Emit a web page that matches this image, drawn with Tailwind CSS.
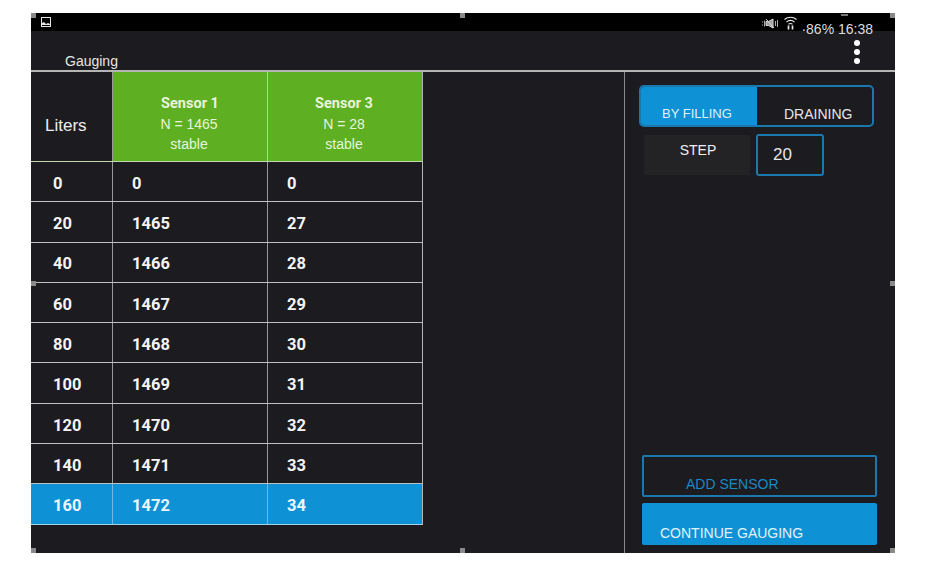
<!DOCTYPE html>
<html lang="en">
<head>
<meta charset="UTF-8">
<title>Gauging</title>
<script src="https://cdn.jsdelivr.net/npm/@tailwindcss/browser@4"></script>
</head>
<body class="bg-white h-[576px] overflow-hidden font-['Liberation_Sans',sans-serif]">
<div class="pt-[13px] pl-[31px]">
  <div class="relative w-[864px] h-[540px] bg-[#1b1b20] text-white flex flex-col">
    <!-- status bar -->
    <div class="h-[18px] bg-black flex items-center justify-between pl-[10px] pr-[22px] shrink-0">
      <svg width="10" height="10" viewBox="0 0 10 10"><rect x="0.5" y="0.5" width="9" height="9" fill="none" stroke="#e5e5e5"/><path d="M1 8V6l2-1 2 2 2-1 2 1v1z" fill="#e5e5e5"/></svg>
      <div class="flex items-start h-[18px]">
        <svg class="mt-[5px]" width="17" height="11" viewBox="0 0 17 11" fill="none" stroke="#d8d8d8" stroke-width="1"><path d="M0.5 3.5v1M0.5 6.5v1M2.5 2.5v6" stroke-width="0.8"/><path d="M4 3.5h2.5L11 1v9L6.500 7.500H4z" fill="#a0a0a0"/><path d="M4 1l8 9"/><path d="M13.500 3v5M15.500 2v7" stroke-width="0.8"/></svg>
        <svg class="ml-[5px] mt-[3px]" width="13" height="14" viewBox="0 0 13 14" fill="none" stroke="#e8e8e8" stroke-width="1.2"><path d="M0.500 3.500c3.500-3 8.500-3 12 0M2.500 6c2.500-2 5.500-2 8 0M4.500 8.200c1.300-.9 2.700-.9 4 0"/><path d="M4.500 9.500v4M8.500 9.500v4" stroke-width="1.700"/></svg>
        <span class="ml-[4px] mt-[8px] text-[14px] leading-[16px] text-[#ddd] whitespace-nowrap">·86% 16:38</span>
      </div>
    </div>
    <!-- header -->
    <div class="h-[39px] flex justify-between shrink-0 pl-[34px] pr-[35px]">
      <span class="mt-[22px] text-[14px] leading-[17px] text-[#e6e6e6]">Gauging</span>
      <div class="mt-[9px] flex flex-col gap-[3px]">
        <i class="block w-[6px] h-[6px] rounded-full bg-white"></i>
        <i class="block w-[6px] h-[6px] rounded-full bg-white"></i>
        <i class="block w-[6px] h-[6px] rounded-full bg-white"></i>
      </div>
    </div>
    <div class="flex-1 flex border-t-2 border-[#b5b5b5] min-h-0">
      <!-- table -->
      <div class="w-[594px] shrink-0 border-r border-[#8a8a8e]">
        <div class="w-[392px] border-r border-[#b5b5b5]">
          <div class="flex h-[90px] border-b border-[#c4d8b4]">
            <div class="w-[82px] border-r border-[#9a9a9a] flex items-center pl-[14px] pt-[18px] text-[17px] text-[#eeeeee]">Liters</div>
            <div class="w-[155px] border-r border-[#b6d59a] bg-[#5eb022] flex flex-col items-center justify-center pt-[15px] pr-[2px] text-[14px] leading-[20px] text-[#e8f3df]">
              <b class="font-['Roboto',sans-serif] text-[14.5px] translate-x-[1px]">Sensor 1</b><span>N = 1465</span><span>stable</span>
            </div>
            <div class="flex-1 bg-[#5eb022] flex flex-col items-center justify-center pt-[15px] pr-[2px] text-[14px] leading-[20px] text-[#e8f3df]">
              <b class="font-['Roboto',sans-serif] text-[14.5px]">Sensor 3</b><span>N = 28</span><span>stable</span>
            </div>
          </div>
          <div class="font-['Roboto',sans-serif] font-bold text-[16.5px] text-[#f4f4f4] [&>div>div]:pt-[5px]">
            <div class="flex h-[40.3px] items-center border-b border-[#c0c0c0]"><div class="w-[82px] h-full flex items-center pl-[22px] border-r border-[#9a9a9a]">0</div><div class="w-[155px] h-full flex items-center pl-[19px] border-r border-[#9a9a9a]">0</div><div class="flex-1 pl-[19px]">0</div></div>
            <div class="flex h-[40.3px] items-center border-b border-[#c0c0c0]"><div class="w-[82px] h-full flex items-center pl-[22px] border-r border-[#9a9a9a]">20</div><div class="w-[155px] h-full flex items-center pl-[19px] border-r border-[#9a9a9a]">1465</div><div class="flex-1 pl-[19px]">27</div></div>
            <div class="flex h-[40.3px] items-center border-b border-[#c0c0c0]"><div class="w-[82px] h-full flex items-center pl-[22px] border-r border-[#9a9a9a]">40</div><div class="w-[155px] h-full flex items-center pl-[19px] border-r border-[#9a9a9a]">1466</div><div class="flex-1 pl-[19px]">28</div></div>
            <div class="flex h-[40.3px] items-center border-b border-[#c0c0c0]"><div class="w-[82px] h-full flex items-center pl-[22px] border-r border-[#9a9a9a]">60</div><div class="w-[155px] h-full flex items-center pl-[19px] border-r border-[#9a9a9a]">1467</div><div class="flex-1 pl-[19px]">29</div></div>
            <div class="flex h-[40.3px] items-center border-b border-[#c0c0c0]"><div class="w-[82px] h-full flex items-center pl-[22px] border-r border-[#9a9a9a]">80</div><div class="w-[155px] h-full flex items-center pl-[19px] border-r border-[#9a9a9a]">1468</div><div class="flex-1 pl-[19px]">30</div></div>
            <div class="flex h-[40.3px] items-center border-b border-[#c0c0c0]"><div class="w-[82px] h-full flex items-center pl-[22px] border-r border-[#9a9a9a]">100</div><div class="w-[155px] h-full flex items-center pl-[19px] border-r border-[#9a9a9a]">1469</div><div class="flex-1 pl-[19px]">31</div></div>
            <div class="flex h-[40.3px] items-center border-b border-[#c0c0c0]"><div class="w-[82px] h-full flex items-center pl-[22px] border-r border-[#9a9a9a]">120</div><div class="w-[155px] h-full flex items-center pl-[19px] border-r border-[#9a9a9a]">1470</div><div class="flex-1 pl-[19px]">32</div></div>
            <div class="flex h-[40.3px] items-center border-b border-[#c0c0c0]"><div class="w-[82px] h-full flex items-center pl-[22px] border-r border-[#9a9a9a]">140</div><div class="w-[155px] h-full flex items-center pl-[19px] border-r border-[#9a9a9a]">1471</div><div class="flex-1 pl-[19px]">33</div></div>
            <div class="flex h-[40.3px] items-center border-b border-[#a6d2ea] bg-[#0f91d6] text-[#eaf6fc]"><div class="w-[82px] h-full flex items-center pl-[22px] border-r border-[#6fb8e0]">160</div><div class="w-[155px] h-full flex items-center pl-[19px] border-r border-[#6fb8e0]">1472</div><div class="flex-1 pl-[19px]">34</div></div>
          </div>
        </div>
      </div>
      <!-- right panel -->
      <div class="flex-1 flex flex-col pl-[14px] pb-[8px]">
        <div class="mt-[13px] w-[235px] h-[42px] flex rounded-[5px] border-2 border-[#1a78ae] overflow-hidden">
          <div class="w-[116px] bg-[#0f91d6] pl-[21px] pt-[19px] text-[13px] leading-[16px] text-[#dff1fb]">BY FILLING</div>
          <div class="flex-1 pl-[27px] pt-[19px] text-[14px] leading-[16px] text-[#e6e6e6]">DRAINING</div>
        </div>
        <div class="mt-[8px] flex items-start">
          <div class="ml-[5px] w-[106px] h-[40px] bg-[#232325] text-center pt-[7px] pl-[2px] text-[14px] leading-[16px] text-[#f0f0f0]">STEP</div>
          <div class="ml-[6px] -mt-[1px] w-[68px] h-[42px] rounded-[3px] border-2 border-[#1a78ae] pl-[15px] pt-[9px] text-[17px] leading-[19px] text-[#e6e6e6]">20</div>
        </div>
        <div class="mt-auto ml-[3px] w-[235px] h-[42px] rounded-[2px] border-2 border-[#1a78ae] pl-[42px] pt-[19px] text-[14px] leading-[16px] text-[#1c88c6]">ADD SENSOR</div>
        <div class="mt-[6px] ml-[3px] w-[235px] h-[42px] rounded-[2px] bg-[#0f91d6] pl-[18px] pt-[22px] text-[14px] leading-[16px] text-[#e3f3fc]">CONTINUE GAUGING</div>
      </div>
    </div>
    <!-- selection handles -->
    <i class="absolute left-0 top-0 w-[5px] h-[5px] bg-[#8a8a8a]"></i>
    <i class="absolute left-[429px] top-0 w-[5px] h-[5px] bg-[#8a8a8a]"></i>
    <i class="absolute right-0 top-0 w-[5px] h-[5px] bg-[#8a8a8a]"></i>
    <i class="absolute left-0 top-[268px] w-[5px] h-[5px] bg-[#8a8a8a]"></i>
    <i class="absolute right-0 top-[268px] w-[5px] h-[5px] bg-[#8a8a8a]"></i>
    <i class="absolute left-0 bottom-0 w-[5px] h-[5px] bg-[#8a8a8a]"></i>
    <i class="absolute left-[429px] bottom-0 w-[5px] h-[5px] bg-[#8a8a8a]"></i>
    <i class="absolute right-0 bottom-0 w-[5px] h-[5px] bg-[#8a8a8a]"></i>
    <i class="absolute left-[810px] top-[1px] w-[7px] h-[2px] bg-[#777]"></i>
  </div>
</div>
</body>
</html>
